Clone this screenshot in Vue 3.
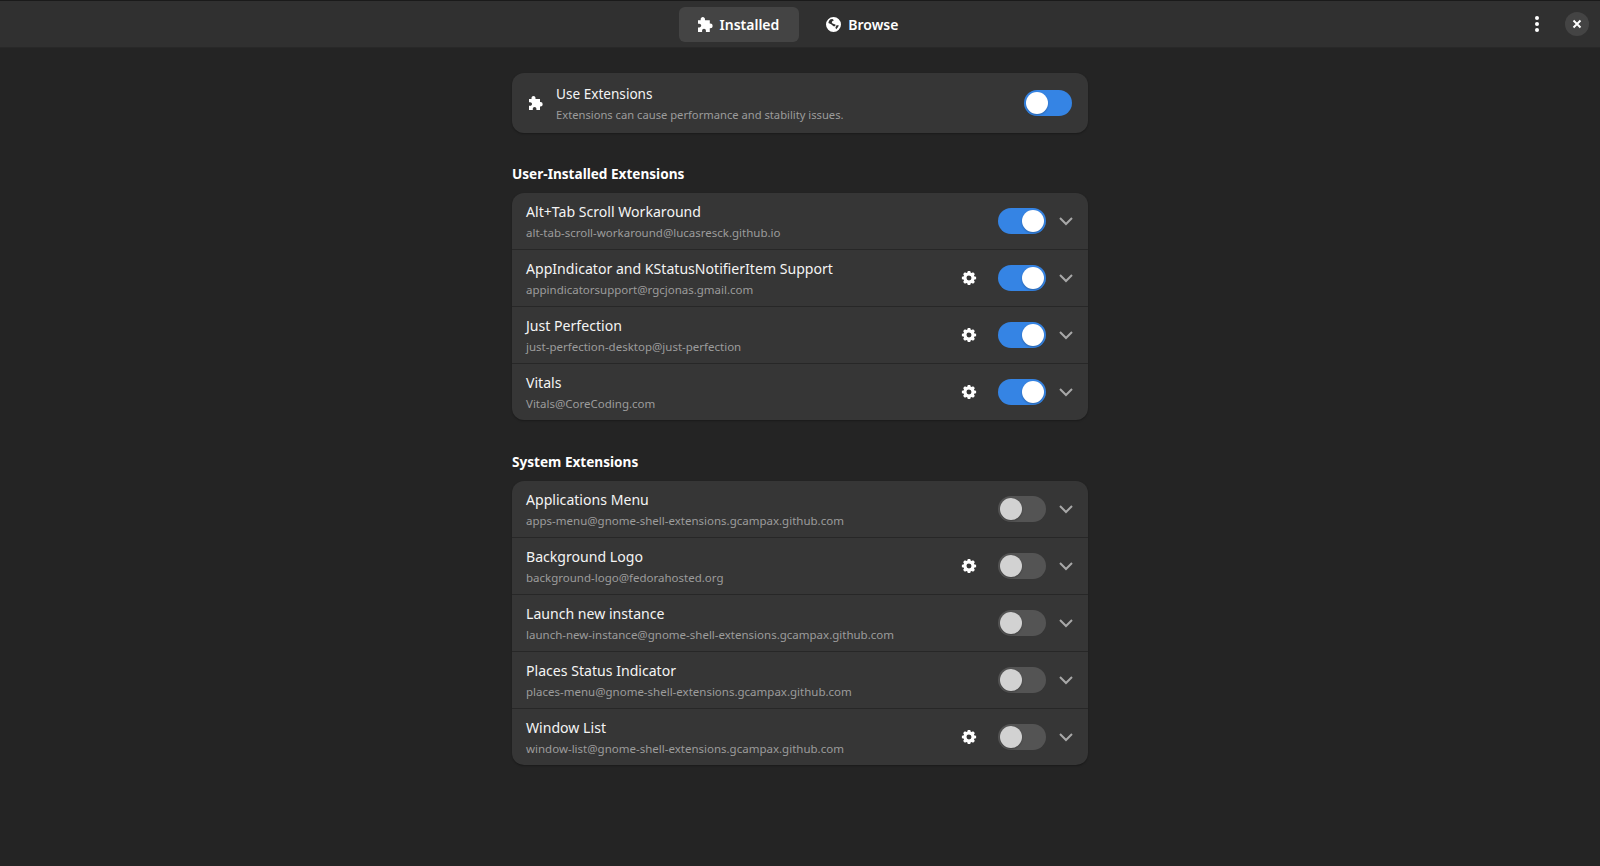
<script setup>
const userExtensions = [
  { name: 'Alt+Tab Scroll Workaround', id: 'alt-tab-scroll-workaround@lucasresck.github.io', prefs: false },
  { name: 'AppIndicator and KStatusNotifierItem Support', id: 'appindicatorsupport@rgcjonas.gmail.com', prefs: true },
  { name: 'Just Perfection', id: 'just-perfection-desktop@just-perfection', prefs: true },
  { name: 'Vitals', id: 'Vitals@CoreCoding.com', prefs: true },
]

const systemExtensions = [
  { name: 'Applications Menu', id: 'apps-menu@gnome-shell-extensions.gcampax.github.com', prefs: false },
  { name: 'Background Logo', id: 'background-logo@fedorahosted.org', prefs: true },
  { name: 'Launch new instance', id: 'launch-new-instance@gnome-shell-extensions.gcampax.github.com', prefs: false },
  { name: 'Places Status Indicator', id: 'places-menu@gnome-shell-extensions.gcampax.github.com', prefs: false },
  { name: 'Window List', id: 'window-list@gnome-shell-extensions.gcampax.github.com', prefs: true },
]

const sections = [
  { title: 'User-Installed Extensions', items: userExtensions, on: true },
  { title: 'System Extensions', items: systemExtensions, on: false },
]

const puzzle = 'M6.5 1C5.4 1 4.5 1.9 4.5 3v1H2v3.2h1.2c1 0 1.8.8 1.8 1.8s-.8 1.8-1.8 1.8H2V15h3.8v-1.2c0-1 .8-1.8 1.8-1.8s1.8.8 1.8 1.8V15H13v-3.5h.5a2.2 2.2 0 0 0 0-4.4H13V4H8.5V3c0-1.1-.9-2-2-2z'
const gear = 'M6.6 1h2.8l.4 1.9c.4.1.8.3 1.1.5l1.7-1 2 2-1 1.7c.2.3.4.7.5 1.1l1.9.4v2.8l-1.9.4c-.1.4-.3.8-.5 1.1l1 1.7-2 2-1.7-1c-.3.2-.7.4-1.1.5L9.4 17H6.6l-.4-1.9c-.4-.1-.8-.3-1.1-.5l-1.7 1-2-2 1-1.7c-.2-.3-.4-.7-.5-1.1L0 10.4V7.6l1.9-.4c.1-.4.3-.8.5-1.1l-1-1.7 2-2 1.7 1c.3-.2.7-.4 1.1-.5zM8 6.2a2.8 2.8 0 1 0 0 5.6 2.8 2.8 0 0 0 0-5.6z'
const globe = 'M8 1a7 7 0 1 0 0 14A7 7 0 0 0 8 1zM5.2 3.2 7 2.9l1.4 1.2-1.6.9-.4 1.5 1.8 1.1 1.6.4-.1 1.6L8 9.6 5.8 7.8 3.2 6.6a5 5 0 0 1 2-3.4zM10.8 8.8h2.1a5 5 0 0 1-2.4 3.6l-.7-1.3z'
</script>

<template>
  <div class="window">
    <header class="headerbar">
      <div class="spacer"></div>
      <nav class="tabs">
        <button class="tab active">
          <svg class="tab-icon" viewBox="2 1 14 14"><path :d="puzzle" /></svg>
          <span>Installed</span>
        </button>
        <button class="tab">
          <svg class="tab-icon" viewBox="1 1 14 14"><path fill-rule="evenodd" :d="globe" /></svg>
          <span>Browse</span>
        </button>
      </nav>
      <div class="actions">
        <button class="menu-btn" aria-label="Menu">
          <i></i><i></i><i></i>
        </button>
        <button class="close-btn" aria-label="Close">
          <svg viewBox="0 0 16 16"><path d="M4 4l8 8M12 4l-8 8" /></svg>
        </button>
      </div>
    </header>

    <main class="content">
      <div class="column">
        <div class="card use-row">
          <svg class="use-icon" viewBox="2 1 14 14"><path :d="puzzle" /></svg>
          <div class="labels">
            <div class="name use-name">Use Extensions</div>
            <div class="sub use-sub">Extensions can cause performance and stability issues.</div>
          </div>
          <span class="switch on knob-left"><span class="knob"></span></span>
        </div>

        <section v-for="section in sections" :key="section.title" class="section">
          <h2>{{ section.title }}</h2>
          <ul class="card list">
            <li v-for="ext in section.items" :key="ext.id" class="row">
              <div class="labels">
                <div class="name">{{ ext.name }}</div>
                <div class="sub">{{ ext.id }}</div>
              </div>
              <svg v-if="ext.prefs" class="gear" viewBox="0 0 16 18"><path fill-rule="evenodd" :d="gear" /></svg>
              <span class="switch" :class="{ on: section.on }"><span class="knob"></span></span>
              <svg class="chevron" viewBox="0 0 16 16"><path d="M2 5l6 6 6-6" /></svg>
            </li>
          </ul>
        </section>
      </div>
    </main>
  </div>
</template>

<style>
html,
body {
  margin: 0;
  background: #242424;
}
</style>

<style scoped>
.window {
  height: 866px;
  overflow: hidden;
  background: #242424;
  color: #fff;
  font-family: "Noto Sans", sans-serif;
  font-size: 14px;
}

.headerbar {
  height: 48px;
  box-sizing: border-box;
  display: flex;
  align-items: center;
  background: #303030;
  border-top: 1px solid #1a1a1a;
  border-bottom: 1px solid #282828;
}

.spacer,
.actions {
  flex: 1;
}

.tabs {
  display: flex;
  gap: 8px;
  margin-left: 8px;
}

.tab {
  height: 35px;
  padding: 0 20px 0 19px;
  display: flex;
  align-items: center;
  gap: 7px;
  border: none;
  border-radius: 6px;
  background: transparent;
  color: #fff;
  font: 600 14px "Noto Sans", sans-serif;
}

.tab.active {
  background: #444;
}

.tab-icon {
  width: 15px;
  height: 15px;
  fill: #fff;
}

.actions {
  display: flex;
  justify-content: flex-end;
  align-items: center;
  padding-right: 11px;
}

.menu-btn {
  width: 24px;
  height: 24px;
  padding: 0;
  margin-right: 16px;
  display: flex;
  flex-direction: column;
  align-items: center;
  justify-content: center;
  gap: 2px;
  border: none;
  background: transparent;
}

.menu-btn i {
  width: 4px;
  height: 4px;
  border-radius: 50%;
  background: #fff;
}

.close-btn {
  width: 24px;
  height: 24px;
  padding: 0;
  display: flex;
  align-items: center;
  justify-content: center;
  border: none;
  border-radius: 50%;
  background: #444;
}

.close-btn svg {
  width: 14px;
  height: 14px;
  fill: none;
  stroke: #fff;
  stroke-width: 2.2;
}

.content {
  display: flex;
  justify-content: center;
  padding-top: 25px;
}

.column {
  width: 576px;
}

.card {
  background: #363636;
  border-radius: 12px;
  box-shadow: 0 1px 2px rgba(0, 0, 0, 0.3);
}

.use-row {
  height: 60px;
  box-sizing: border-box;
  display: flex;
  align-items: center;
  padding: 0 16px 0 17px;
}

.use-icon {
  width: 14px;
  height: 14px;
  margin-right: 13px;
  fill: #fff;
}

.labels {
  flex: 1;
  min-width: 0;
}

.name {
  padding-top: 1px;
  font-size: 14.1px;
  line-height: 20px;
  color: #f4f4f4;
}

.use-name {
  font-size: 13.6px;
}

.sub {
  margin-top: 2px;
  font-size: 11.5px;
  line-height: 18px;
  color: #9c9c9c;
}

.use-sub {
  font-size: 11.2px;
}

.section {
  margin-top: 30px;
}

.section + .section {
  margin-top: 31px;
}

.section h2 {
  margin: 0 0 8px;
  font-size: 13.6px;
  line-height: 22px;
  font-weight: 700;
  color: #fff;
}

.list {
  margin: 0;
  padding: 0;
  list-style: none;
}

.row {
  height: 56px;
  display: flex;
  align-items: center;
  padding: 0 14px;
  border-bottom: 1px solid #272727;
}

.row:last-child {
  border-bottom: none;
}

.gear {
  width: 16px;
  height: 16px;
  margin-right: 21px;
  fill: #fff;
}

.switch {
  position: relative;
  width: 48px;
  height: 26px;
  flex: none;
  border-radius: 13px;
  background: #545454;
}

.switch.on {
  background: #3584e4;
}

.knob {
  position: absolute;
  top: 2px;
  left: 2px;
  width: 22px;
  height: 22px;
  border-radius: 50%;
  background: #d2d2d2;
  box-shadow: 0 1px 2px rgba(0, 0, 0, 0.25);
}

.switch.on .knob {
  left: 24px;
  background: #fff;
}

.switch.on.knob-left .knob {
  left: 2px;
}

.chevron {
  width: 16px;
  height: 16px;
  margin-left: 12px;
  fill: none;
  stroke: #a8a8a8;
  stroke-width: 2;
}
</style>
